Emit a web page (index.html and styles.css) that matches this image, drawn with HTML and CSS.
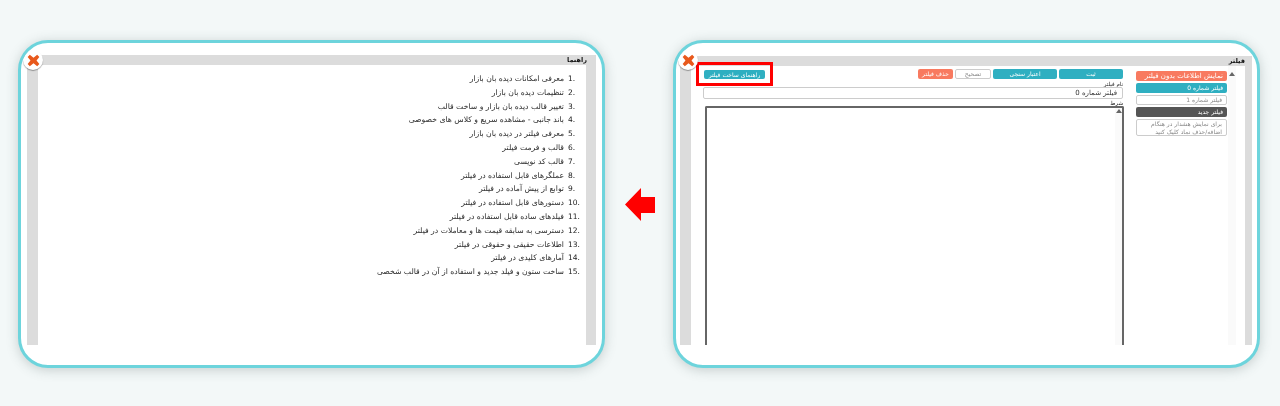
FILE: index.html
```html
<!DOCTYPE html>
<html lang="fa">
<head>
    <meta charset="UTF-8">
    <title>راهنما</title>
    <link rel="stylesheet" href="styles.css">
</head>
<body>
    <div class="page">
        <div class="card card-help">
            <div class="window">
                <div class="window-title">راهنما</div>
                <div class="window-body help-body">
                    <ul class="help-list">
                        <li><span class="num">1.</span><span>معرفی امکانات دیده بان بازار</span></li>
                        <li><span class="num">2.</span><span>تنظیمات دیده بان بازار</span></li>
                        <li><span class="num">3.</span><span>تغییر قالب دیده بان بازار و ساخت قالب</span></li>
                        <li><span class="num">4.</span><span>باند جانبی - مشاهده سریع و کلاس های خصوصی</span></li>
                        <li><span class="num">5.</span><span>معرفی فیلتر در دیده بان بازار</span></li>
                        <li><span class="num">6.</span><span>قالب و فرمت فیلتر</span></li>
                        <li><span class="num">7.</span><span>قالب کد نویسی</span></li>
                        <li><span class="num">8.</span><span>عملگرهای قابل استفاده در فیلتر</span></li>
                        <li><span class="num">9.</span><span>توابع از پیش آماده در فیلتر</span></li>
                        <li><span class="num">10.</span><span>دستورهای قابل استفاده در فیلتر</span></li>
                        <li><span class="num">11.</span><span>فیلدهای ساده قابل استفاده در فیلتر</span></li>
                        <li><span class="num">12.</span><span>دسترسی به سابقه قیمت ها و معاملات در فیلتر</span></li>
                        <li><span class="num">13.</span><span>اطلاعات حقیقی و حقوقی در فیلتر</span></li>
                        <li><span class="num">14.</span><span>آمارهای کلیدی در فیلتر</span></li>
                        <li><span class="num">15.</span><span>ساخت ستون و فیلد جدید و استفاده از آن در قالب شخصی</span></li>
                    </ul>
                </div>
            </div>
            <span class="close">
                <svg viewBox="0 0 12 12" width="13" height="13"><path d="M2.6 0.8 6 3.4 9.4 0.8 11.4 2.8 8.8 6 11.4 9.2 9.4 11.2 6 8.6 2.6 11.2 0.6 9.2 3.2 6 0.6 2.8Z" fill="#e8591c"/></svg>
            </span>
        </div>

        <svg class="arrow" viewBox="0 0 30 34" width="30" height="34"><path d="M0 16.500 16 0V9H30V25H16V33Z" fill="#ff0000"/></svg>

        <div class="card card-filter">
            <div class="window">
                <div class="window-title">فیلتر</div>
                <div class="window-body filter-body">
                    <div class="scroll-track"><span class="tri"></span></div>
                    <div class="side">
                        <div class="pill salmon">نمایش اطلاعات بدون فیلتر</div>
                        <div class="pill teal">فیلتر شماره 0</div>
                        <div class="pill outline">فیلتر شماره 1</div>
                        <div class="pill dark">فیلتر جدید</div>
                        <div class="pill outline hint">برای نمایش هشدار در هنگام اضافه/حذف نماد کلیک کنید</div>
                    </div>
                    <div class="editor">
                        <div class="toolbar">
                            <div class="btn teal btn-save">ثبت</div>
                            <div class="btn teal btn-save">اعتبار سنجی</div>
                            <div class="btn outline btn-edit">تصحیح</div>
                            <div class="btn salmon btn-del">حذف فیلتر</div>
                            <div class="guide-box">
                                <div class="btn teal btn-guide">راهنمای ساخت فیلتر</div>
                            </div>
                        </div>
                        <div class="field-label">نام فیلتر</div>
                        <div class="name-input">فیلتر شماره 0</div>
                        <div class="field-label cond-label">شرط</div>
                        <div class="cond-input"><div class="cond-scroll"><span class="tri"></span></div></div>
                    </div>
                </div>
            </div>
            <span class="close">
                <svg viewBox="0 0 12 12" width="13" height="13"><path d="M2.6 0.8 6 3.4 9.4 0.8 11.4 2.8 8.8 6 11.4 9.2 9.4 11.2 6 8.6 2.6 11.2 0.6 9.2 3.2 6 0.6 2.8Z" fill="#e8591c"/></svg>
            </span>
        </div>
    </div>
</body>
</html>
```

FILE: styles.css
```css
/* Page */
* {
    box-sizing: border-box;
}

html, body {
    margin: 0;
    height: 100%;
    overflow: hidden;
}

body {
    background: #f3f8f8;
    font-family: "DejaVu Sans", "Noto Sans", sans-serif;
    color: #333;
}

.page {
    display: flex;
    align-items: flex-start;
    padding: 40px 20px 0 18px;
}

/* Cards */
.card {
    position: relative;
    flex: none;
    width: 587px;
    height: 328px;
    background: #fff;
    border: 3px solid #6dd4dc;
    border-radius: 30px;
    box-shadow: 0 2px 12px rgba(60, 80, 80, 0.25);
    overflow: hidden;
    padding-bottom: 20px;
}

.card-help {
    padding-top: 12px;
    padding-left: 6px;
    padding-right: 6px;
}

.card-filter {
    padding-top: 13px;
    padding-left: 4px;
    padding-right: 5px;
}

.arrow {
    flex: none;
    margin: 148px 18px 0 20px;
}

.close {
    position: absolute;
    left: 2px;
    top: 7px;
    width: 20px;
    height: 20px;
    border-radius: 50%;
    background: #fff;
    box-shadow: 0 1px 1px rgba(0, 0, 0, 0.35);
    display: flex;
    align-items: center;
    justify-content: center;
    filter: blur(0.3px);
}

/* Window */
.window {
    display: flex;
    flex-direction: column;
    height: 100%;
    filter: blur(0.35px);
}

.window-title {
    flex: none;
    height: 10px;
    background: #dcdcdc;
    direction: rtl;
    padding-right: 9px;
    font-size: 6.5px;
    line-height: 10px;
    font-weight: bold;
    color: #111;
}

.card-filter .window-title {
    padding-right: 7px;
}

.window-body {
    flex: 1;
    min-height: 0;
    border-left: 11px solid #dcdcdc;
    border-right: 10px solid #dcdcdc;
}

/* Help list */
.help-list {
    list-style: none;
    margin: 0;
    padding: 7px 8px 0 0;
    direction: rtl;
}

.help-list li {
    display: flex;
    height: 13.8px;
    font-size: 7.7px;
    line-height: 13.8px;
    color: #2e2e2e;
}

.num {
    flex: none;
    width: 14px;
    direction: ltr;
    text-align: left;
    padding-left: 4px;
    font-size: 7.5px;
    color: #222;
}

/* Filter window */
.filter-body {
    display: flex;
    direction: rtl;
    border-right-width: 7px;
}

.scroll-track {
    flex: none;
    width: 8px;
    margin-right: 9px;
    background: #fafafa;
    padding-top: 6px;
    display: flex;
    justify-content: center;
}

.tri {
    display: block;
    width: 0;
    height: 0;
    border-left: 3px solid transparent;
    border-right: 3px solid transparent;
    border-bottom: 4px solid #666;
}

.side {
    flex: none;
    width: 91px;
    margin-right: 1px;
    padding-top: 5px;
    display: flex;
    flex-direction: column;
    gap: 2px;
}

.pill {
    height: 10px;
    border-radius: 2px;
    font-size: 6px;
    line-height: 10px;
    padding: 0 4px;
}

.pill.salmon {
    font-size: 7px;
}

.hint {
    height: 17px;
    line-height: 8px;
}

.teal {
    background: #2fafc1;
    color: #fff;
}

.salmon {
    background: #f87a60;
    color: #fff;
}

.dark {
    background: #555;
    color: #fff;
}

.outline {
    background: #fff;
    border: 1px solid #ccc;
    color: #888;
    line-height: 8px;
}

.editor {
    flex: none;
    width: 420px;
    margin-right: 13px;
    display: flex;
    flex-direction: column;
}

.toolbar {
    height: 15px;
    display: flex;
    align-items: flex-start;
    padding-top: 3px;
    gap: 2px;
}

.btn {
    flex: none;
    height: 10px;
    border-radius: 2px;
    font-size: 6px;
    line-height: 10px;
    text-align: center;
}

.btn.outline {
    line-height: 8px;
}

.btn-save {
    width: 64px;
}

.btn-edit {
    width: 36px;
}

.btn-del {
    width: 35px;
}

.guide-box {
    flex: none;
    margin-right: 143px;
    margin-top: -7px;
    width: 77px;
    height: 24px;
    border: 3px solid #f00;
    display: flex;
    align-items: center;
    justify-content: center;
}

.btn-guide {
    width: 61px;
    height: 9px;
    line-height: 9px;
}

.field-label {
    font-size: 5.5px;
    line-height: 6px;
    height: 6px;
    color: #222;
}

.name-input {
    height: 12px;
    border: 1px solid #ccc;
    border-radius: 2px;
    font-size: 7px;
    line-height: 10px;
    padding-right: 5px;
    color: #333;
}

.cond-label {
    margin-top: 1px;
}

.cond-input {
    flex: 1;
    min-height: 0;
    border: 2px solid #666;
    border-bottom: 0;
    border-radius: 2px 2px 0 0;
    margin-left: 2px;
    margin-right: -1px;
}

.cond-scroll {
    width: 7px;
    height: 100%;
    background: #fafafa;
    padding-top: 1px;
    display: flex;
    justify-content: center;
}
```
